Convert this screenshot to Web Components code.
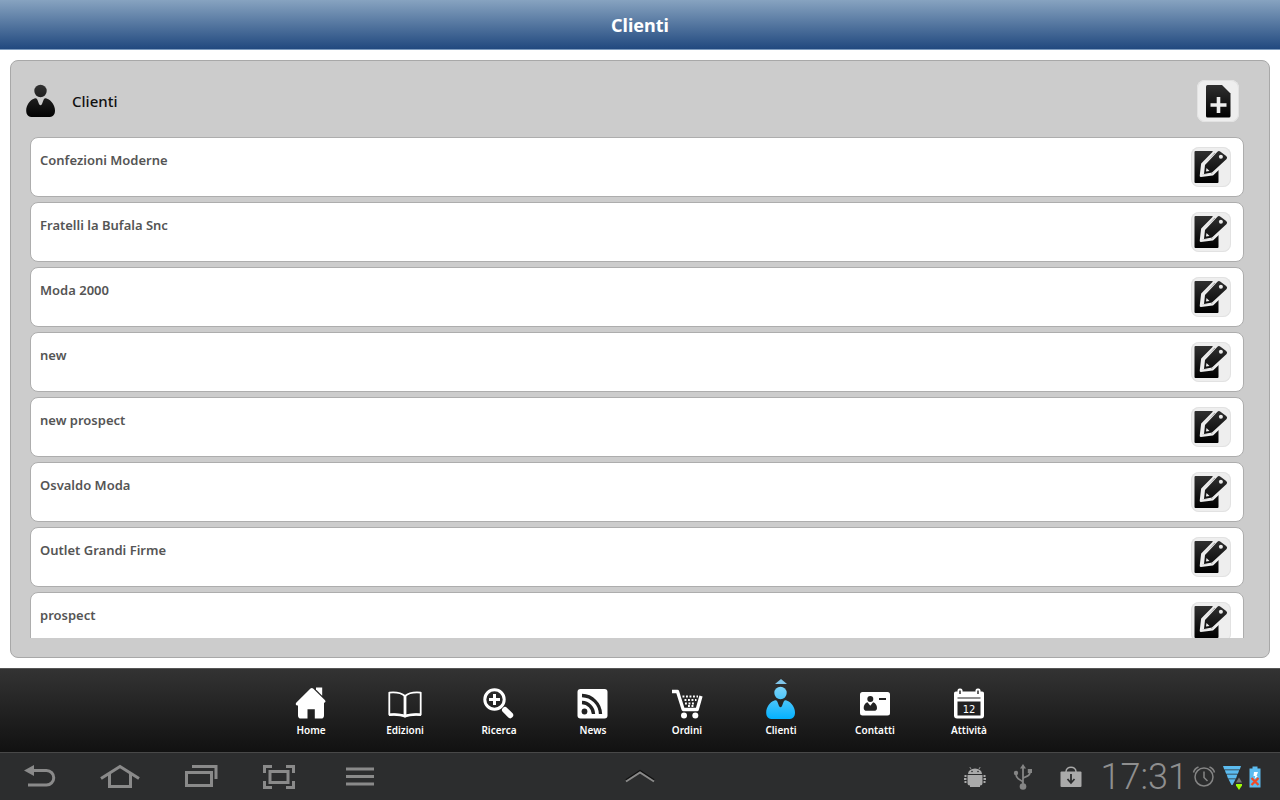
<!DOCTYPE html>
<html lang="it">
<head>
<meta charset="utf-8">
<meta name="viewport" content="width=device-width, initial-scale=1">
<title>Clienti</title>
<style>
    html, body {
        height: 100%;
        margin: 0;
    }
    body {
        background: #fff;
        font-family: "Noto Sans", "Open Sans", sans-serif;
    }
</style>
</head>
<body>
<clienti-app></clienti-app>

<script>
/* Icons, drawn in the box given by the viewBox */
const ICONS = {
    person: `<svg viewBox="0 0 30 34">
        <defs><linearGradient id="g" x1="0" y1="0" x2="0" y2="34" gradientUnits="userSpaceOnUse">
            <stop offset="0" stop-color="var(--icon-top, #333)"/><stop offset="1" stop-color="var(--icon-bottom, #000)"/>
        </linearGradient></defs>
        <g fill="url(#g)"><circle cx="14.500" cy="7" r="6.200"/>
        <path d="M8.500 14.500c1.200-.4 2.200 0 2.900 1.200l1.600 4.300q1.500 2.500 3 0l1.600-4.300c.7-1.200 1.700-1.600 2.900-1.200 5 1.700 8.500 6.900 8.500 11.900 0 4.600-2.300 6.500-6.800 6.500H7C2.500 32.900.2 31 .2 26.400c0-5 3.300-10.200 8.300-11.900z"/></g></svg>`,
    add: `<svg viewBox="0 0 42 42">
        <defs><linearGradient id="g" x1="0" y1="0" x2="0" y2="1"><stop offset="0" stop-color="#303030"/><stop offset="1" stop-color="#000"/></linearGradient></defs>
        <path fill="url(#g)" d="M10.500 5H25l8.500 8.500V36a1.500 1.500 0 0 1-1.500 1.500H10.500A1.500 1.500 0 0 1 9 36V6.500A1.500 1.500 0 0 1 10.500 5z"/>
        <path stroke="#eee" stroke-width="3.600" d="M21.500 17v16M13.500 25h16"/></svg>`,
    edit: `<svg viewBox="0 0 40 40">
        <defs><linearGradient id="g" x1="0" y1="4" x2="0" y2="36" gradientUnits="userSpaceOnUse"><stop offset="0" stop-color="#303030"/><stop offset="1" stop-color="#000"/></linearGradient></defs>
        <path fill="url(#g)" d="M4.500 4H21L24 6 11 18 10 28l10-1 7.500-4.500V35a1 1 0 0 1-1 1h-22a1 1 0 0 1-1-1V5a1 1 0 0 1 1-1z"/>
        <path fill="none" stroke="#eee" stroke-width="2.200" stroke-linejoin="round" d="M24.500 3.500L11.200 17 9.800 28.800 21.500 27.500 31 18.500"/>
        <path fill="url(#g)" d="M26.200 5q1.500-1.700 3.300-.3l5.700 4.300q1.600 1.400.4 3L21 25.500l-8 1.500 1-9z"/>
        <circle cx="29.900" cy="9.700" r="2" fill="#eee"/>
        <path fill="#eee" d="M15.500 21l3 3-3.500.6z"/></svg>`,
    home: `<svg viewBox="0 0 34 34"><path fill="#fff" d="M16.500 2.500c.8-.8 1.800-.8 2.600 0L30.800 14c1.300 1.300.7 2.700-.8 2.700V29.500c0 2-1 3.100-3 3.100h-6.200v-9.300h-7.300v9.300H7c-2 0-3-1.100-3-3.100V19.500c-2 .5-3-1.500-1.600-2.900z"/><path fill="#fff" d="M22 1.500h6.200v8.200L22 3.500z"/></svg>`,
    book: `<svg viewBox="0 0 34 34"><path fill="none" stroke="#fff" stroke-width="1.800" stroke-linejoin="round" d="M17 10C13 6.500 7.500 6 1.300 6.600v22c6-.6 12-.2 15.700 1.700 3.700-1.900 9.700-2.300 15.700-1.700v-22C26.500 6 21 6.500 17 10z"/><path stroke="#fff" stroke-width="2.800" d="M17 9v22"/><path fill="none" stroke="#fff" stroke-width="2.500" d="M1 28.700c6-.4 12-.2 16 1.600 4-1.800 10-2 16-1.600"/></svg>`,
    search: `<svg viewBox="0 0 34 34"><circle cx="12.500" cy="13.500" r="9.700" fill="none" stroke="#fff" stroke-width="3"/><path stroke="#fff" stroke-width="3" d="M12.500 8v11M7 13.500h11"/><path stroke="#fff" stroke-width="6" stroke-linecap="round" d="M23 24l5.200 5.200"/></svg>`,
    rss: `<svg viewBox="0 0 34 34"><rect x="1.500" y="3" width="30" height="29.500" rx="3" fill="#fff"/><circle cx="8.500" cy="25.500" r="2.900" fill="#222"/><path fill="none" stroke="#222" stroke-width="3.300" d="M6 16.500a12 12 0 0 1 11.500 11.500M6 9.500a19 19 0 0 1 18.500 18.500"/></svg>`,
    cart: `<svg viewBox="0 0 34 34"><path fill="none" stroke="#fff" stroke-width="3.300" stroke-linejoin="round" d="M2 5.500h5.500L13.200 23.500h14L31 10"/><g fill="#fff"><circle cx="14" cy="29.500" r="3"/><circle cx="25.300" cy="29.500" r="3"/></g><path stroke="#fff" stroke-width="1.900" stroke-dasharray="1.900 1.600" d="M12.500 10.500h15.500M14.500 14h12M15 17.500h10M18 20h6"/></svg>`,
    card: `<svg viewBox="0 0 34 34"><rect x="2" y="6" width="30" height="23.500" rx="2.500" fill="#fff"/><g fill="#222"><circle cx="12.300" cy="13" r="3"/><path d="M9.500 16.300l2.800 3.500 2.800-3.500c2.500.7 3.900 3.200 3.900 5.700 0 1.900-1 2.800-3 2.800H8.700c-2 0-3-.9-3-2.800 0-2.500 1.300-5 3.800-5.700z"/><path d="M21 12h7v2h-7z"/></g></svg>`,
    calendar: `<svg viewBox="0 0 34 34"><path fill="#fff" d="M4 5.500h26c1.400 0 2 .7 2 2v22c0 2-1 3-3 3H5c-2 0-3-1-3-3v-22c0-1.300.6-2 2-2z"/><rect x="5.500" y="2.500" width="5" height="6" rx="2" fill="#fff"/><rect x="23.500" y="2.500" width="5" height="6" rx="2" fill="#fff"/><path fill="#222" d="M7.300 4.500h1.400v3.500H7.300zM25.300 4.500h1.400v3.500h-1.400zM5.500 11.500h23v1H5.500zM5.500 15.500h23v14H5.500z"/><text x="17" y="26.500" text-anchor="middle" font-family="DejaVu Sans" font-weight="400" font-size="10" fill="#fff">12</text></svg>`,
    back: `<svg viewBox="0 0 40 32"><path fill="none" stroke="currentColor" stroke-width="3" d="M12 9.500h14.500a7.200 7.200 0 0 1 0 14.500H8"/><path fill="currentColor" d="M4 9.500L14 4v11z"/></svg>`,
    house: `<svg viewBox="0 0 40 32"><path fill="none" stroke="currentColor" stroke-width="3" d="M1 17.500L20 5.500l19 12M9.500 13v12.500h21V13"/></svg>`,
    recent: `<svg viewBox="0 0 40 32"><path fill="none" stroke="currentColor" stroke-width="3" d="M6.500 11.500h25v13h-25zM12 5.500h24V18"/></svg>`,
    capture: `<svg viewBox="0 0 40 32"><path fill="none" stroke="currentColor" stroke-width="3" d="M10 10.500h18v11H10zM4.500 12V5.500H12M26 5.500h7.500V12M33.500 20v6.500H26M12 26.500H4.500V20"/></svg>`,
    menu: `<svg viewBox="0 0 40 32"><path stroke="currentColor" stroke-width="3" d="M6 8h28M6 15.500h28M6 23h28"/></svg>`,
    chevron: `<svg viewBox="0 0 40 32"><path fill="none" stroke="#111" stroke-width="2" d="M6 19l14-9 14 9"/><path fill="none" stroke="#8a8a8a" stroke-width="2" d="M6 20.500l14-9 14 9"/></svg>`,
    android: `<svg viewBox="0 0 24 24"><g fill="#aaaaaa"><path d="M5 9a7 5.500 0 0 1 14 0zM4.500 10h15v8q0 2.500-2.500 2.500H7Q4.500 20.500 4.500 18zM7 20h10v2H7z"/><path d="M1.500 10h2v2h-2zM1 13h2.500v2H1zM1.500 16h2v2h-2zM20.500 10h2v2h-2zM20.500 13H23v2h-2.500zM20.500 16h2v2h-2z"/></g><path stroke="#aaa" stroke-width=".8" d="M8 4L6.800 2M16 4l1.200-2"/><circle cx="9" cy="6.500" r=".8" fill="#2c2d2e"/><circle cx="15" cy="6.500" r=".8" fill="#2c2d2e"/></svg>`,
    usb: `<svg viewBox="0 0 24 28"><g fill="none" stroke="#858585" stroke-width="1.800"><path d="M12 4v19M12 20c0-4-7-2-7-9M12 16c0-3 7-1 7-7"/></g><g fill="#858585"><path d="M9 5.500L12 1l3 4.500z"/><circle cx="12" cy="23.500" r="3.300"/><circle cx="5" cy="10" r="2.200"/><path d="M16.800 6H21v4h-4.200z"/></g></svg>`,
    bag: `<svg viewBox="0 0 24 24"><rect x="1.500" y="6.500" width="21" height="15.500" rx="1" fill="#aaa"/><path fill="none" stroke="#aaa" stroke-width="1.500" d="M7 7c0-6.500 10-6.500 10 0"/><path fill="none" stroke="#2c2d2e" stroke-width="1.800" d="M12 9v8.500M8.500 14l3.500 4 3.500-4"/></svg>`,
    alarm: `<svg viewBox="0 0 24 24"><g fill="none" stroke="#858585" stroke-width="1.500"><circle cx="12" cy="12" r="9"/><path d="M12 6.500v6l3.500 3.500M1.500 7.500Q2.500 3.500 6.500 2M22.500 7.500q-1-4-5-5.500"/></g></svg>`,
    wifi: `<svg viewBox="0 0 20 26"><path fill="#5cbcf0" d="M1 2h18l-1.200 3.500H2.200zM2.800 6.300h14.400l-1.300 3.500H4.100zM4.600 10.600h10.800L14 14.500H6zM6.500 15.300h7L10.500 21h-1z"/><path fill="#2c2d2e" stroke="#2c2d2e" stroke-width="2" d="M17 13l-3.500 6.500L17 25.500l3-6z"/><path fill="#777" d="M17 13.500l3 5h-6z"/><path fill="#9dfb08" d="M14 20h6v1.500L17 26l-3-4.500z"/></svg>`,
    battery: `<svg viewBox="0 0 14 24"><path fill="#5cbcf0" d="M4.500 1.500h5v2h3v19h-11v-19h3z"/><path fill="#fff" d="M6 7h4L8.500 11H10l-3.500 3 .8-3H5.500z"/><path stroke="#f04a28" stroke-width="2.300" d="M3.500 13l7 7M10.500 13l-7 7"/></svg>`
};

class AppIcon extends HTMLElement {
    constructor() {
        super();
        this.attachShadow({ mode: 'open' });
    }

    connectedCallback() {
        this.shadowRoot.innerHTML = `
            <style>
                :host {
                    display: block;
                    flex: none;
                }
                svg {
                    display: block;
                    width: 100%;
                    height: 100%;
                }
            </style>
            ${ICONS[this.getAttribute('name')] || ''}
        `;
    }
}

class TitleBar extends HTMLElement {
    constructor() {
        super();
        this.attachShadow({ mode: 'open' });
        this.shadowRoot.innerHTML = `
            <style>
                :host {
                    display: flex;
                    align-items: center;
                    justify-content: center;
                    box-sizing: border-box;
                    height: 50px;
                    border-bottom: 1px solid #7f9dbf;
                    background: linear-gradient(#87a3c0, #21497f);
                }
                h1 {
                    margin: 0;
                    font-size: 18px;
                    line-height: 24px;
                    font-weight: 700;
                    color: #fff;
                }
            </style>
            <h1><slot></slot></h1>
        `;
    }
}

class IconButton extends HTMLElement {
    constructor() {
        super();
        this.attachShadow({ mode: 'open' });
    }

    connectedCallback() {
        this.shadowRoot.innerHTML = `
            <style>
                :host {
                    display: block;
                    flex: none;
                    width: 40px;
                    height: 40px;
                }
                button {
                    display: block;
                    box-sizing: border-box;
                    width: 100%;
                    height: 100%;
                    padding: 0;
                    border: 0;
                    border-radius: 8px;
                    background: #eee;
                    box-shadow: inset 0 0 0 1px #e2e2e2;
                    cursor: pointer;
                }
                app-icon {
                    width: 100%;
                    height: 100%;
                }
            </style>
            <button type="button" aria-label="${this.getAttribute('label')}">
                <app-icon name="${this.getAttribute('icon')}"></app-icon>
            </button>
        `;
    }
}

class ClientRow extends HTMLElement {
    constructor() {
        super();
        this.attachShadow({ mode: 'open' });
        this.shadowRoot.innerHTML = `
            <style>
                :host {
                    display: flex;
                    flex: none;
                    justify-content: space-between;
                    box-sizing: border-box;
                    height: 60px;
                    padding: 9px 12px 9px 9px;
                    border: 1px solid #adadad;
                    border-radius: 8px;
                    background: #fff;
                }
                .name {
                    padding-top: 3px;
                    font-size: 13px;
                    line-height: 20px;
                    font-weight: 600;
                    color: #555;
                }
            </style>
            <span class="name"><slot></slot></span>
            <icon-button icon="edit" label="Modifica"></icon-button>
        `;
    }
}

class ClientPanel extends HTMLElement {
    constructor() {
        super();
        this.attachShadow({ mode: 'open' });
        this.shadowRoot.innerHTML = `
            <style>
                :host {
                    display: flex;
                    flex-direction: column;
                    box-sizing: border-box;
                    min-height: 0;
                    padding-bottom: 19px;
                    border: 1px solid #a8a8a8;
                    border-radius: 8px;
                    background: #ccc;
                }
                header {
                    display: flex;
                    align-items: center;
                    flex: none;
                    gap: 16px;
                    height: 42px;
                    padding: 19px 30px 15px 15px;
                }
                header app-icon {
                    width: 30px;
                    height: 34px;
                }
                h2 {
                    flex: 1;
                    margin: 0;
                    font-size: 15px;
                    line-height: 24px;
                    font-weight: 500;
                    color: #111;
                }
                header icon-button {
                    width: 42px;
                    height: 42px;
                }
                .list {
                    display: flex;
                    flex: 1;
                    flex-direction: column;
                    gap: 5px;
                    min-height: 0;
                    margin: 0 25px 0 19px;
                    overflow-y: auto;
                    scrollbar-width: none;
                }
            </style>
            <header>
                <app-icon name="person"></app-icon>
                <h2><slot name="title"></slot></h2>
                <icon-button icon="add" label="Nuovo cliente"></icon-button>
            </header>
            <div class="list"><slot></slot></div>
        `;
    }
}

class TabItem extends HTMLElement {
    constructor() {
        super();
        this.attachShadow({ mode: 'open' });
    }

    connectedCallback() {
        this.shadowRoot.innerHTML = `
            <style>
                :host {
                    display: block;
                    width: 94px;
                    --icon-top: #7fd4f8;
                    --icon-bottom: #00b0ff;
                }
                a {
                    display: flex;
                    flex-direction: column;
                    align-items: center;
                    position: relative;
                    padding-top: 17px;
                    color: #fff;
                    font-size: 10px;
                    line-height: 16px;
                    font-weight: 600;
                    text-decoration: none;
                }
                app-icon {
                    width: 34px;
                    height: 34px;
                    margin-bottom: 2px;
                }
                :host([active]) a::before {
                    content: "";
                    position: absolute;
                    top: 10px;
                    border: 6px solid transparent;
                    border-top: 0;
                    border-bottom: 5px solid #7fc4e8;
                }
            </style>
            <a href="#${this.getAttribute('to')}">
                <app-icon name="${this.getAttribute('icon')}"></app-icon>
                <slot></slot>
            </a>
        `;
    }
}

class TabBar extends HTMLElement {
    constructor() {
        super();
        this.attachShadow({ mode: 'open' });
        this.shadowRoot.innerHTML = `
            <style>
                :host {
                    display: block;
                    box-sizing: border-box;
                    height: 84px;
                    border-top: 1px solid #555;
                    background: linear-gradient(#333, #111);
                }
                nav {
                    display: flex;
                    justify-content: center;
                }
            </style>
            <nav><slot></slot></nav>
        `;
    }
}

class SystemBar extends HTMLElement {
    constructor() {
        super();
        this.attachShadow({ mode: 'open' });
        this.shadowRoot.innerHTML = `
            <style>
                :host {
                    display: grid;
                    grid-template-columns: 1fr auto 1fr;
                    align-items: center;
                    box-sizing: border-box;
                    height: 48px;
                    border-top: 1px solid #484848;
                    background: #2c2d2e;
                    color: #8a8a8a;
                }
                .keys {
                    display: flex;
                    gap: 40px;
                    padding-left: 20px;
                }
                button {
                    padding: 0;
                    border: 0;
                    background: none;
                    color: inherit;
                    cursor: pointer;
                }
                button app-icon {
                    width: 40px;
                    height: 32px;
                }
                .status {
                    display: flex;
                    align-items: center;
                    justify-content: flex-end;
                    padding-right: 18px;
                }
                .notices {
                    display: flex;
                    align-items: center;
                    gap: 24px;
                    margin-right: 18px;
                }
                .small {
                    width: 24px;
                    height: 24px;
                }
                .usb {
                    width: 24px;
                    height: 28px;
                }
                time {
                    margin-right: 4px;
                    font-family: Roboto, sans-serif;
                    font-size: 36px;
                    line-height: 44px;
                    font-weight: 300;
                    color: #8f8f8f;
                }
                .wifi {
                    width: 20px;
                    height: 26px;
                    margin: 0 6px;
                }
                .battery {
                    width: 14px;
                    height: 24px;
                }
            </style>
            <div class="keys">
                <button type="button" aria-label="Indietro"><app-icon name="back"></app-icon></button>
                <button type="button" aria-label="Home"><app-icon name="house"></app-icon></button>
                <button type="button" aria-label="Recenti"><app-icon name="recent"></app-icon></button>
                <button type="button" aria-label="Cattura"><app-icon name="capture"></app-icon></button>
                <button type="button" aria-label="Menu"><app-icon name="menu"></app-icon></button>
            </div>
            <button type="button" aria-label="Apri"><app-icon name="chevron"></app-icon></button>
            <div class="status">
                <div class="notices">
                    <app-icon class="small" name="android"></app-icon>
                    <app-icon class="usb" name="usb"></app-icon>
                    <app-icon class="small" name="bag"></app-icon>
                </div>
                <time>17:31</time>
                <app-icon class="small" name="alarm"></app-icon>
                <app-icon class="wifi" name="wifi"></app-icon>
                <app-icon class="battery" name="battery"></app-icon>
            </div>
        `;
    }
}

class ClientiApp extends HTMLElement {
    constructor() {
        super();
        this.attachShadow({ mode: 'open' });
        this._clients = [
            'Confezioni Moderne',
            'Fratelli la Bufala Snc',
            'Moda 2000',
            'new',
            'new prospect',
            'Osvaldo Moda',
            'Outlet Grandi Firme',
            'prospect'
        ];
        this._tabs = [
            ['home', 'Home'],
            ['book', 'Edizioni'],
            ['search', 'Ricerca'],
            ['rss', 'News'],
            ['cart', 'Ordini'],
            ['person', 'Clienti'],
            ['card', 'Contatti'],
            ['calendar', 'Attività']
        ];
    }

    connectedCallback() {
        this.render();
    }

    render() {
        this.shadowRoot.innerHTML = `
            <style>
                :host {
                    display: flex;
                    flex-direction: column;
                    height: 100vh;
                }
                title-bar, tab-bar, system-bar {
                    flex: none;
                }
                main {
                    display: flex;
                    flex: 1;
                    min-height: 0;
                    padding: 10px;
                }
                client-panel {
                    flex: 1;
                }
            </style>
            <title-bar>Clienti</title-bar>
            <main>
                <client-panel>
                    <span slot="title">Clienti</span>
                    ${this._clients.map(name => `<client-row>${name}</client-row>`).join('')}
                </client-panel>
            </main>
            <tab-bar>
                ${this._tabs.map(([icon, label]) => `
                    <tab-item icon="${icon}" to="${icon}" ${label === 'Clienti' ? 'active' : ''}>${label}</tab-item>
                `).join('')}
            </tab-bar>
            <system-bar></system-bar>
        `;
    }
}

customElements.define('app-icon', AppIcon);
customElements.define('title-bar', TitleBar);
customElements.define('icon-button', IconButton);
customElements.define('client-row', ClientRow);
customElements.define('client-panel', ClientPanel);
customElements.define('tab-item', TabItem);
customElements.define('tab-bar', TabBar);
customElements.define('system-bar', SystemBar);
customElements.define('clienti-app', ClientiApp);
</script>
</body>
</html>
